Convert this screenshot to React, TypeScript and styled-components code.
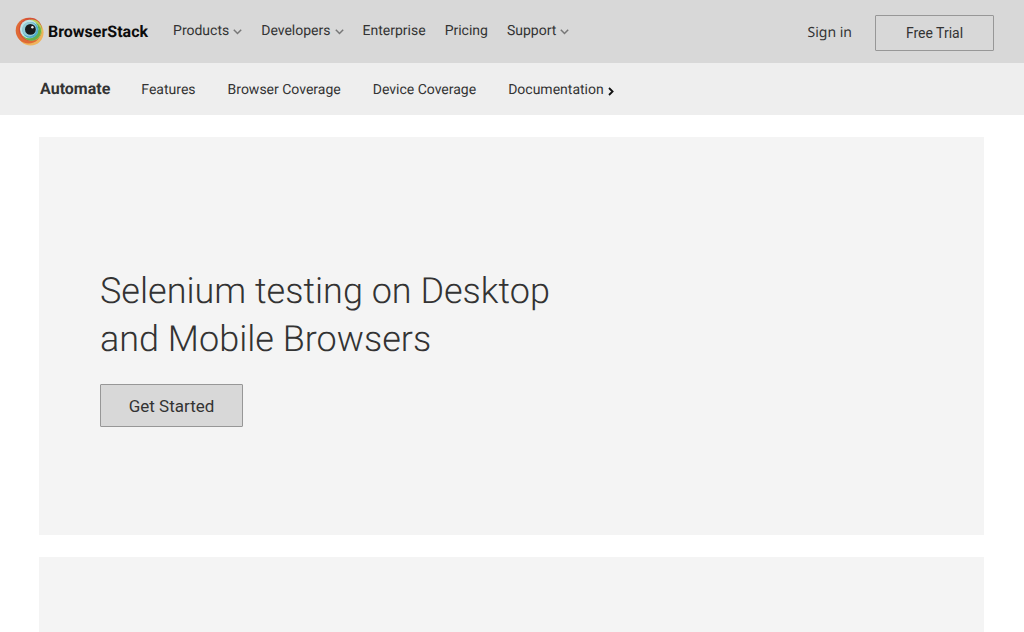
import React from "react";
import styled, { createGlobalStyle } from "styled-components";

const GlobalStyle = createGlobalStyle`
  *, *::before, *::after { box-sizing: border-box; }
  body {
    margin: 0;
    background: #ffffff;
    color: #333333;
    font-family: Roboto, "Liberation Sans", sans-serif;
    -webkit-font-smoothing: antialiased;
    text-rendering: geometricPrecision;
  }
`;

const Header = styled.header`
  display: flex;
  align-items: center;
  height: 63px;
  padding: 0 30px 0 15px;
  background: #d8d8d8;
`;

const Brand = styled.a`
  display: flex;
  align-items: center;
  gap: 4px;
  color: #0c0c0c;
  text-decoration: none;
`;

const BrandName = styled.span`
  font-size: 16px;
  font-weight: 700;
  line-height: 20px;
`;

const MainNav = styled.nav`
  display: flex;
  gap: 19px;
  margin-left: 25px;
  padding-bottom: 1px;
`;

const NavLink = styled.a`
  display: flex;
  align-items: center;
  gap: 4px;
  color: inherit;
  font-size: 14px;
  line-height: 20px;
  text-decoration: none;
  white-space: nowrap;
`;

const Chevron = styled.svg`
  display: block;
  margin-top: 2px;
  fill: none;
`;

const Account = styled.div`
  display: flex;
  align-items: center;
  gap: 23px;
  margin-left: auto;
  padding-top: 2px;
`;

const SignIn = styled.a`
  color: inherit;
  font-family: "Noto Sans", sans-serif;
  font-size: 14px;
  line-height: 20px;
  text-decoration: none;
`;

const OutlineButton = styled.button<{ $large?: boolean }>`
  width: ${(p) => (p.$large ? 143 : 119)}px;
  height: ${(p) => (p.$large ? 43 : 36)}px;
  padding: 0;
  border: 1px solid #979797;
  border-radius: 1px;
  background: #d8d8d8;
  color: inherit;
  font-family: inherit;
  font-size: ${(p) => (p.$large ? 17 : 14)}px;
  cursor: pointer;
`;

const ProductNav = styled.nav`
  display: flex;
  align-items: center;
  height: 52px;
  padding: 0 40px;
  background: #eeeeee;
`;

const ProductName = styled.strong`
  margin-right: 31px;
  font-size: 16px;
  font-weight: 700;
  line-height: 20px;
`;

const ProductLinks = styled.div`
  display: flex;
  gap: 32px;
  padding-top: 2px;
`;

const Main = styled.main`
  display: grid;
  gap: 22px;
  padding: 22px 40px 0 39px;
`;

const Hero = styled.section`
  display: flex;
  flex-direction: column;
  align-items: flex-start;
  padding: 130px 61px 108px;
  background: #f4f4f4;
`;

const Title = styled.h1`
  max-width: 480px;
  margin: 0 0 21px;
  font-size: 36px;
  font-weight: 300;
  line-height: 48px;
`;

const NextSection = styled.section`
  min-height: 75px;
  background: #f4f4f4;
`;

const Down = () => (
  <Chevron width="9" height="6" viewBox="0 0 9 6" stroke="#777777" strokeWidth="1.5" aria-hidden="true">
    <path d="M0.8 0.8 L4.5 4.5 L8.2 0.8" />
  </Chevron>
);

const Right = () => (
  <Chevron width="6" height="9" viewBox="0 0 6 9" stroke="#111111" strokeWidth="1.8" aria-hidden="true">
    <path d="M1 1 L4.6 4.5 L1 8" />
  </Chevron>
);

const Logo = () => (
  <svg width="29" height="29" viewBox="0 0 29 29" aria-hidden="true">
    <circle cx="15.6" cy="15.6" r="13" fill="#efb45c" />
    <circle cx="13.6" cy="13.6" r="12.9" fill="#df6a35" />
    <circle cx="15.4" cy="12.4" r="11.6" fill="#d65038" />
    <circle cx="16.6" cy="13.2" r="10.6" fill="#bccd58" />
    <circle cx="16.4" cy="14.2" r="9.6" fill="#67b04b" />
    <circle cx="14.1" cy="12" r="9.2" fill="#bfe2e6" />
    <circle cx="15.4" cy="13" r="8" fill="#4cacc8" />
    <circle cx="14.4" cy="12.2" r="7.2" fill="#93cbd6" />
    <circle cx="15.4" cy="12.4" r="5.4" fill="#171b1d" />
    <circle cx="17.4" cy="10.2" r="1.2" fill="#eeeeee" />
  </svg>
);

const mainLinks = [
  { label: "Products", menu: true },
  { label: "Developers", menu: true },
  { label: "Enterprise", menu: false },
  { label: "Pricing", menu: false },
  { label: "Support", menu: true },
];

export default function App() {
  return (
    <>
      <GlobalStyle />
      <Header>
        <Brand href="#">
          <Logo />
          <BrandName>BrowserStack</BrandName>
        </Brand>
        <MainNav aria-label="Main">
          {mainLinks.map(({ label, menu }) => (
            <NavLink key={label} href="#">
              {label}
              {menu && <Down />}
            </NavLink>
          ))}
        </MainNav>
        <Account>
          <SignIn href="#">Sign in</SignIn>
          <OutlineButton type="button">Free Trial</OutlineButton>
        </Account>
      </Header>
      <ProductNav aria-label="Automate">
        <ProductName>Automate</ProductName>
        <ProductLinks>
          <NavLink href="#">Features</NavLink>
          <NavLink href="#">Browser Coverage</NavLink>
          <NavLink href="#">Device Coverage</NavLink>
          <NavLink href="#">
            Documentation
            <Right />
          </NavLink>
        </ProductLinks>
      </ProductNav>
      <Main>
        <Hero>
          <Title>Selenium testing on Desktop and Mobile Browsers</Title>
          <OutlineButton type="button" $large>
            Get Started
          </OutlineButton>
        </Hero>
        <NextSection />
      </Main>
    </>
  );
}
